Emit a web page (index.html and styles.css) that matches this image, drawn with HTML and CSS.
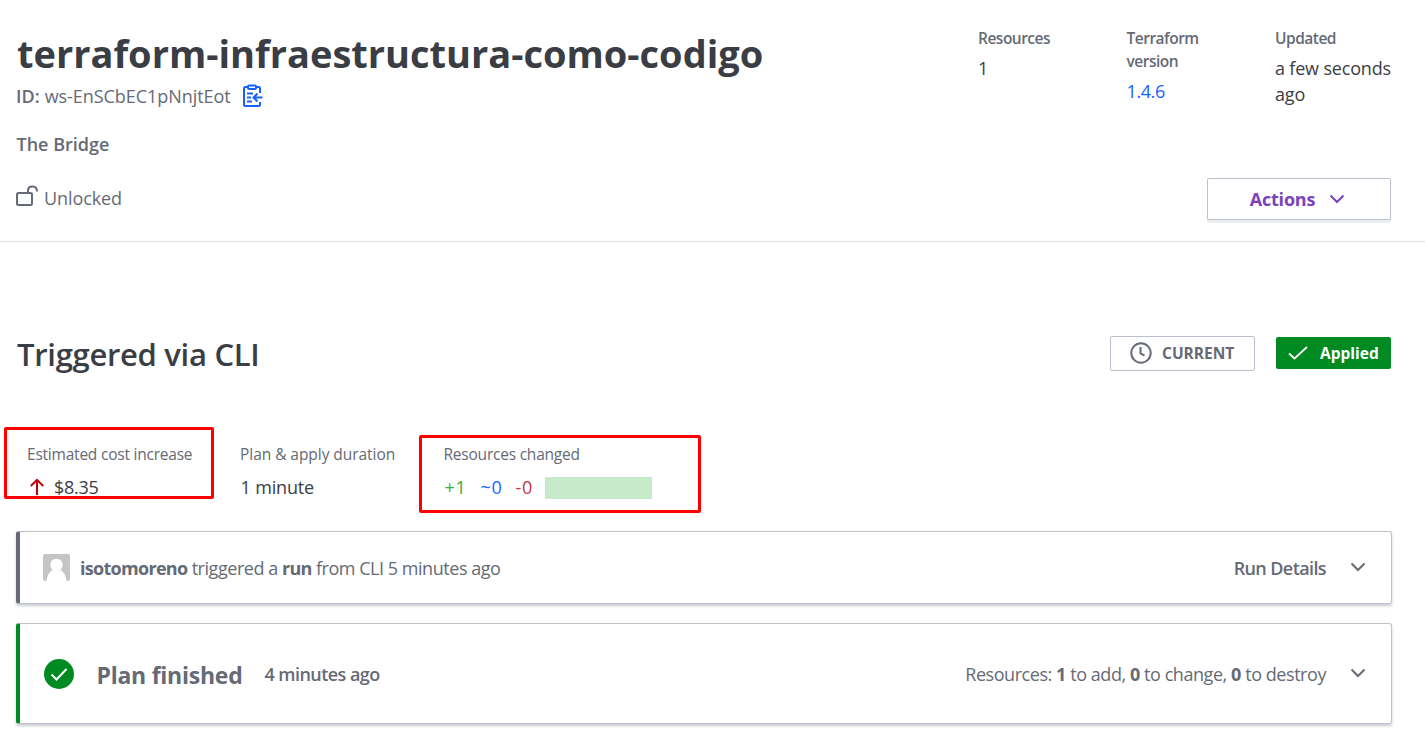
FILE: index.html
```html
<!DOCTYPE html>
<html lang="en">
<head>
<meta charset="utf-8">
<title>terraform-infraestructura-como-codigo</title>
<link rel="stylesheet" href="styles.css">
</head>
<body>
<header class="header">
  <div class="workspace">
    <h1 class="title">terraform-infraestructura-como-codigo</h1>
    <div class="ws-id"><span class="ws-label">ID:</span><span class="ws-value">ws-EnSCbEC1pNnjtEot</span>
      <svg class="clipboard" width="22" height="24" viewBox="0 0 22 24" fill="none" stroke="#1563ff" stroke-width="2"><path d="M6 3H3.5Q2 3 2 4.500V20.500Q2 22 3.500 22H16.500Q18 22 18 20.500V18M14 3h2.500Q18 3 18 4.500V9"/><rect x="6" y="1.500" width="8" height="3.500" rx="1"/><path d="M5 9.500h6M5 13.500h4M5 17.500h5M20.500 13.500H12M15.500 9.500l-4 4 4 4"/></svg>
    </div>
    <div class="org">The Bridge</div>
    <div class="lock">
      <svg width="23" height="22" viewBox="0 0 23 22" fill="none" stroke="#656a76" stroke-width="2"><rect x="1" y="8" width="15" height="12" rx="1.500"/><path d="M12 8V5.500C12 3 13.500 1.500 16.500 1.500S21 3 21 6.500"/></svg>
      <span>Unlocked</span>
    </div>
  </div>
  <div class="side">
    <dl class="meta">
      <div><dt>Resources</dt><dd>1</dd></div>
      <div><dt>Terraform version</dt><dd class="link">1.4.6</dd></div>
      <div><dt>Updated</dt><dd class="updated">a few seconds<br>ago</dd></div>
    </dl>
    <button class="actions"><span>Actions</span>
      <svg width="16" height="10" viewBox="0 0 16 10" fill="none" stroke="#7b42bc" stroke-width="2"><path d="M1.500 1.500 8 8l6.500-6.500"/></svg>
    </button>
  </div>
</header>
<main class="main">
  <div class="run-head">
    <h2 class="run-title">Triggered via CLI</h2>
    <span class="badge current">
      <svg width="22" height="22" viewBox="0 0 22 22" fill="none" stroke="#656a76" stroke-width="2"><circle cx="11" cy="11" r="9.700"/><path d="M10.500 5v6.500l4 2"/></svg>
      <span>CURRENT</span></span>
    <span class="badge applied">
      <svg width="20" height="14" viewBox="0 0 20 14" fill="none" stroke="#fff" stroke-width="1.800"><path d="M1 7.500l5.500 5L19 1"/></svg>
      <span>Applied</span></span>
  </div>
  <div class="stats">
    <div class="stat cost"><div class="label">Estimated cost increase</div>
      <div class="value"><svg width="16" height="17" viewBox="0 0 16 17" fill="none" stroke="#c00005" stroke-width="2"><path d="M8 17V2M1.800 8 8 1.800 14.200 8"/></svg><span>$8.35</span></div></div>
    <div class="stat duration"><div class="label">Plan &amp; apply duration</div><div class="value">1 minute</div></div>
    <div class="stat changed"><div class="label">Resources changed</div>
      <div class="value"><span class="add">+1</span><span class="mod">~0</span><span class="del">-0</span><span class="bar"></span></div></div>
    <div class="mark mark-cost"></div>
    <div class="mark mark-changed"></div>
  </div>
  <section class="card run-card">
    <svg class="avatar" width="27" height="27" viewBox="0 0 27 27"><rect width="27" height="27" rx="2" fill="#c5c5c5"/><circle cx="13.500" cy="11" r="6.200" fill="#fff"/><path d="M3.500 27C4 21 7 17 10.500 15.500h6C20 17 23 21 23.500 27z" fill="#fff"/></svg>
    <p class="run-text"><b>isotomoreno</b> triggered a <b>run</b> from CLI 5 minutes ago</p>
    <span class="details">Run Details</span>
    <svg class="chev" width="16" height="10" viewBox="0 0 16 10"><path d="M1.500 1.500 8 8l6.500-6.500"/></svg>
  </section>
  <section class="card plan-card">
    <svg class="ok" width="30" height="30" viewBox="0 0 30 30" fill="none"><circle cx="15" cy="15" r="15" fill="#008a22"/><path d="M7.500 15.500l5 5L22.500 10" stroke="#fff" stroke-width="2"/></svg>
    <h3 class="plan-title">Plan finished</h3>
    <span class="plan-time">4 minutes ago</span>
    <span class="summary">Resources: <b>1</b> to add, <b>0</b> to change, <b>0</b> to destroy</span>
    <svg class="chev" width="16" height="10" viewBox="0 0 16 10"><path d="M1.500 1.500 8 8l6.500-6.500"/></svg>
  </section>
</main>
</body>
</html>
```
FILE: styles.css
```css
* { box-sizing: border-box; }
body { margin: 0; height: 729px; overflow: hidden; background: #fff; color: #656a76; font: 18px/26px "Open Sans", "Noto Sans", sans-serif; white-space: nowrap; }
h1, h2, h3, p, dl, dd { margin: 0; }
svg { flex: none; display: block; }
b { font-weight: 700; }

.header { display: flex; justify-content: space-between; height: 242px; padding: 0 34px 0 16px; border-bottom: 1px solid #dfe0e3; }
.workspace { padding-top: 29px; }
.title { padding-left: 1px; font-size: 38px; line-height: 49px; font-weight: 700; color: #3b3d45; }
.ws-id { display: flex; align-items: center; height: 26px; margin-top: 5px; }
.ws-label { font-weight: 600; margin-right: 5px; }
.ws-value { letter-spacing: -.05px; }
.clipboard { margin-left: 11px; }
.org { margin-top: 22px; padding-left: .5px; font-weight: 600; }
.lock { display: flex; align-items: center; gap: 5px; margin-top: 28px; letter-spacing: -.1px; }
.lock svg { margin-top: -4px; }
.side { display: flex; flex-direction: column; align-items: flex-end; padding-top: 27px; }
.meta { display: grid; grid-template-columns: repeat(3, 116px); column-gap: 32.5px; height: 151px; white-space: normal; }
.meta dt { font-size: 15.500px; line-height: 23px; font-weight: 600; letter-spacing: -.5px; }
.meta dd { margin-top: 5px; color: #3b3d45; }
.meta .link { color: #1563ff; letter-spacing: -.4px; }
.meta .updated { letter-spacing: -.18px; white-space: nowrap; }
.actions { display: flex; align-items: center; justify-content: center; gap: 14px; width: 184px; height: 42px; padding: 0 3px 0 0; border: 1px solid #bac1cc; border-radius: 2px; background: #fff; box-shadow: 0 3px 1px #ebedef; color: #7b42bc; font: inherit; font-weight: 700; letter-spacing: -.2px; }

.main { padding: 94px 33px 0 16px; }
.run-head { display: flex; align-items: center; height: 35px; padding-right: 1px; }
.run-title { margin-right: auto; padding: 2px 0 0 1px; font-size: 31px; line-height: 35px; font-weight: 600; letter-spacing: -.3px; color: #3b3d45; }
.badge { display: flex; align-items: center; font-size: 15.500px; font-weight: 700; border-radius: 2px; }
.badge span { margin-top: -1px; }
.current { width: 145px; height: 35px; padding-left: 19px; gap: 10px; border: 1px solid #bac1cc; }
.current svg { margin-top: -2px; }
.applied { width: 115px; height: 32px; margin: -1px 0 0 21px; padding-left: 12px; gap: 12px; background: #008a22; color: #fff; }

.stats { position: relative; display: flex; height: 160px; padding: 71px 0 0 11px; }
.label { font-size: 15.500px; line-height: 24px; letter-spacing: -.22px; }
.duration .label { letter-spacing: -.05px; }
.value { display: flex; align-items: center; height: 26px; margin-top: 8px; color: #3b3d45; }
.cost { width: 213px; }
.cost .value { letter-spacing: -.25px; }
.cost svg { margin: -1px 9px 0 2px; }
.duration { width: 203.500px; }
.duration .value { padding-left: .5px; letter-spacing: -.15px; }
.changed .value { padding-left: 1px; letter-spacing: .6px; }
.add { width: 36px; color: #2eb039; }
.mod { width: 35px; color: #1563ff; }
.del { width: 29px; color: #c73445; }
.bar { width: 107px; height: 22px; margin-top: 2px; background: #c6e9c9; }
.mark { position: absolute; border: 3px solid #f00; border-radius: 2px; }
.mark-cost { left: -12px; top: 56px; width: 210px; height: 72px; }
.mark-changed { left: 403px; top: 64px; width: 282px; height: 78px; }

.card { display: flex; align-items: center; padding: 0 25px 0 23px; border: 1px solid #bfc2ca; border-left: 4px solid #656a76; border-radius: 3px; box-shadow: 0 2px 3px rgba(101, 106, 118, .35); }
.run-card { height: 73px; }
.plan-card { height: 101px; margin-top: 19px; border-left-color: #008a22; }
.run-text { margin-left: 10px; letter-spacing: -.46px; }
.run-text b { letter-spacing: -.7px; }
.details { margin-left: auto; font-weight: 600; letter-spacing: -.6px; }
.chev { margin: -1px 0 0 24px; fill: none; stroke: #656a76; stroke-width: 2; }
.ok { margin-left: 1px; }
.plan-title { margin: 2px 0 0 22.500px; font-size: 23px; font-weight: 700; letter-spacing: -.25px; }
.plan-time { margin-left: 22px; font-weight: 600; letter-spacing: -.55px; }
.summary { margin-left: auto; letter-spacing: -.44px; }
```
